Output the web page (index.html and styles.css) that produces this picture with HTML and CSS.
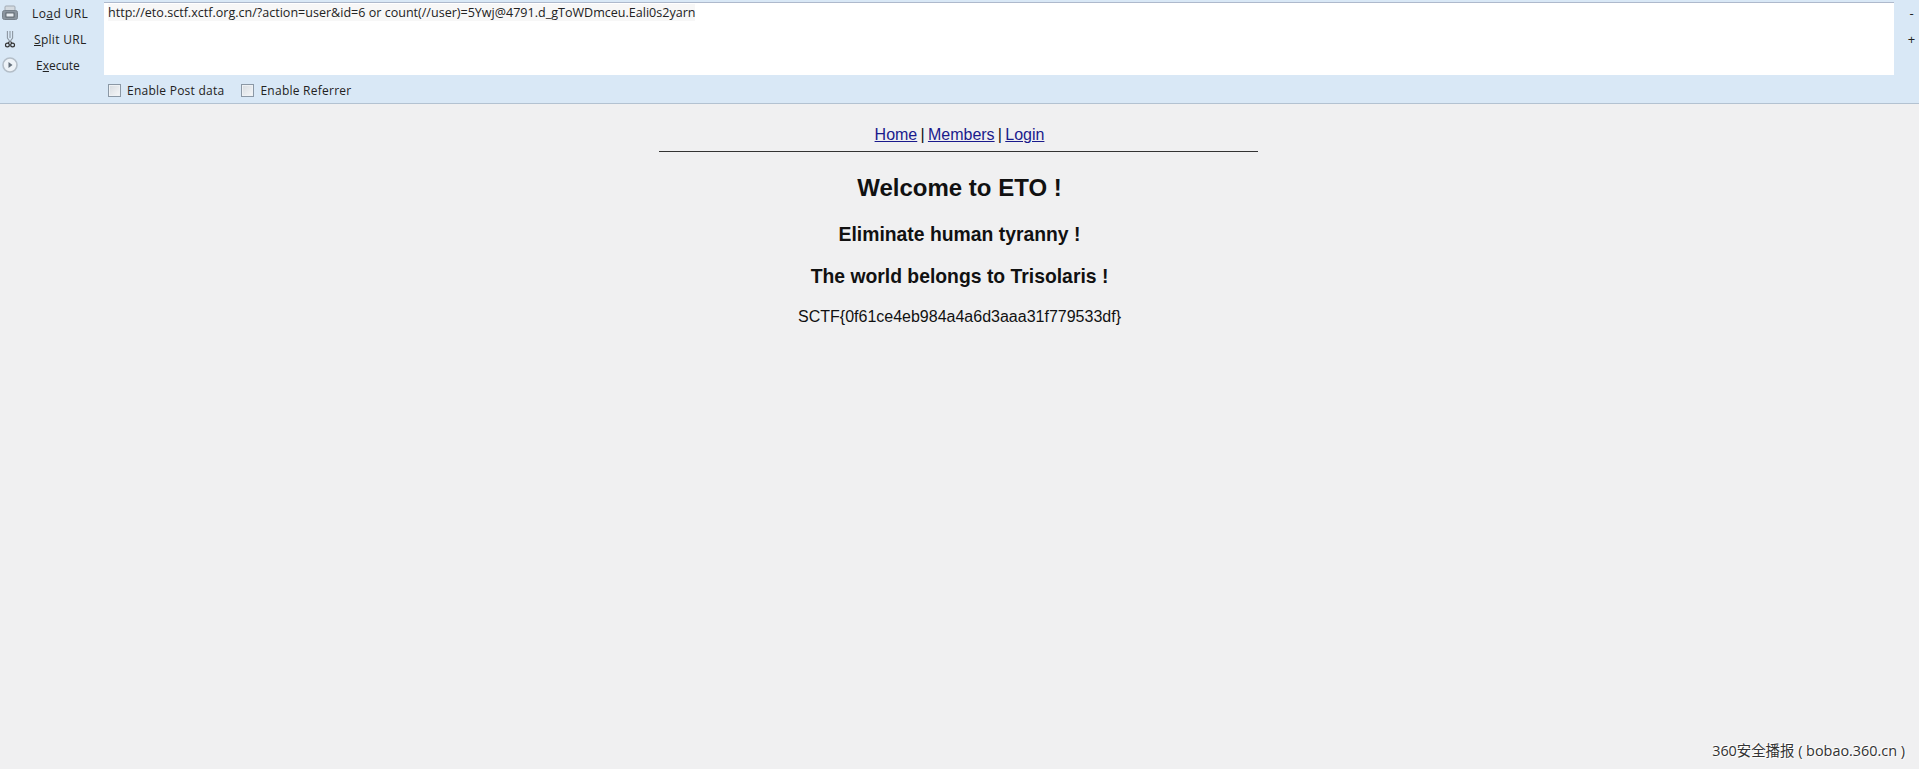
FILE: index.html
```html
<!DOCTYPE html>
<html lang="en">
<head>
<meta charset="utf-8">
<title>ETO</title>
<link rel="stylesheet" href="styles.css">
</head>
<body>
<section class="hackbar">
  <div class="tools">
    <div class="tool">
      <svg class="icon" viewBox="0 0 18 18" aria-hidden="true">
        <rect x="4" y="2" width="10" height="6" rx="1" fill="#d4dae0" stroke="#a2abb4"/>
        <rect x="1.5" y="6.5" width="15" height="9" rx="2" fill="#8b959f" stroke="#78828c"/>
        <rect x="5" y="9" width="8" height="4" fill="#e8edf2" stroke="#4c555e" stroke-width=".8"/>
      </svg>
      <span class="tool-label tool-load">Lo<u>a</u>d URL</span>
    </div>
    <div class="tool">
      <svg class="icon" viewBox="0 0 18 18" aria-hidden="true">
        <path d="M6.4 1 L6.4 8 L9 11.5 L11.6 8 L11.6 1 M9 1 L9 8" fill="none" stroke="#8d97a1" stroke-width="1.1"/>
        <path d="M8.4 11.5 L7 13.5 M9.6 11.5 L11 13.5" stroke="#333" stroke-width="1.2"/>
        <circle cx="6.4" cy="15" r="1.9" fill="none" stroke="#333" stroke-width="1.2"/>
        <circle cx="11.6" cy="15" r="1.9" fill="none" stroke="#333" stroke-width="1.2"/>
      </svg>
      <span class="tool-label tool-split"><u>S</u>plit URL</span>
    </div>
    <div class="tool">
      <svg class="icon" viewBox="0 0 18 18" aria-hidden="true">
        <circle cx="9" cy="9" r="7" fill="#eef3f8" stroke="#b4bec8" stroke-width="1.6"/>
        <path d="M7.5 6 L11.5 9 L7.5 12 Z" fill="#66717c"/>
      </svg>
      <span class="tool-label tool-exec">E<u>x</u>ecute</span>
    </div>
  </div>
  <div class="url-box"><span class="url-text">http://eto.sctf.xctf.org.cn/?action=user&amp;id=6 or count(//user)=5Ywj@4791.d_gToWDmceu.Eali0s2yarn</span></div>
  <div class="zoomers"><span class="zoomer">-</span><span class="zoomer">+</span></div>
  <div class="options">
    <label class="option"><input type="checkbox" class="check">Enable Post data</label>
    <label class="option"><input type="checkbox" class="check">Enable Referrer</label>
  </div>
</section>
<main class="site">
  <nav class="nav"><a href="#">Home</a> | <a href="#">Members</a> | <a href="#">Login</a></nav>
  <hr class="rule">
  <h1 class="title">Welcome to ETO !</h1>
  <h2 class="sub sub-first">Eliminate human tyranny !</h2>
  <h2 class="sub">The world belongs to Trisolaris !</h2>
  <p class="flag">SCTF{0f61ce4eb984a4a6d3aaa31f779533df}</p>
</main>
<div class="watermark">360安全播报 ( bobao.360.cn )</div>
</body>
</html>
```
FILE: styles.css
```css
* { box-sizing: border-box; }
html, body { height: 100%; }
body {
  margin: 0;
  background: #f0f0f1;
  color: #111;
  font-family: "Liberation Sans", Arial, sans-serif;
  overflow: hidden;
  position: relative;
}
.hackbar {
  display: grid;
  grid-template-columns: 104px 1fr 25px;
  grid-template-rows: 76px 27px;
  height: 104px;
  background: #d9e8f6;
  border-bottom: 1px solid #b3c2d1;
  font-family: "Open Sans", "Noto Sans", sans-serif;
  font-size: 12px;
  color: #222;
}
.tools {
  grid-row: 1 / 3;
  display: flex;
  flex-direction: column;
}
.tool {
  height: 26px;
  flex: none;
  display: flex;
  align-items: center;
  padding-left: 1px;
}
.icon { width: 18px; height: 18px; flex: none; }
.tool-label { white-space: nowrap; }
.tool-load { margin-left: 13px; letter-spacing: .4px; }
.tool-split { margin-left: 15px; letter-spacing: .3px; }
.tool-exec { margin-left: 17px; }
.url-box {
  background: #fff;
  border-top: 1px solid #aeb9cc;
  margin: 2px 0 1px;
  padding: 1px 0 0 4px;
  line-height: 17px;
}
.url-text { white-space: nowrap; background: #f7f7f7; font-size: 12.55px; }
.zoomers {
  display: flex;
  flex-direction: column;
  align-items: center;
  padding: 3px 0 0 10px;
  font-size: 13px;
}
.zoomer { height: 26px; line-height: 20px; }
.options {
  grid-column: 2 / 4;
  display: flex;
  align-items: center;
  gap: 17px;
  padding: 1px 0 0 4px;
}
.option { display: flex; align-items: center; gap: 6px; letter-spacing: .25px; }
.check {
  appearance: none;
  margin: 0;
  width: 13px;
  height: 13px;
  border: 1px solid #8b98a5;
  background: linear-gradient(135deg, #d6dbe0, #f6f7f8);
  box-shadow: inset 0 0 0 1px #eef1f4;
}
.site {
  width: 600px;
  margin: 0 auto;
  padding-top: 22px;
  text-align: center;
}
.nav { font-size: 16px; line-height: 18px; word-spacing: -1.2px; }
.nav a { color: #1a1a8c; }
.rule {
  margin: 7px 0 0 -1px;
  width: 599px;
  height: 1px;
  border: 0;
  background: #333;
}
.title { margin: 22px 0 0; font-size: 24px; line-height: 28px; }
.sub { margin: 19px 0 0; font-size: 19.35px; line-height: 23px; }
.sub-first { margin-top: 21px; }
.flag { margin: 20px 0 0; font-size: 16px; line-height: 18px; }
.watermark {
  position: absolute;
  right: 14px;
  bottom: 9px;
  font-family: "Open Sans", "Noto Sans CJK SC", sans-serif;
  font-size: 14.4px;
  line-height: 18px;
  color: #333;
  text-shadow: 1px 1px 1px #fff, -1px -1px 1px #fff;
}
```
